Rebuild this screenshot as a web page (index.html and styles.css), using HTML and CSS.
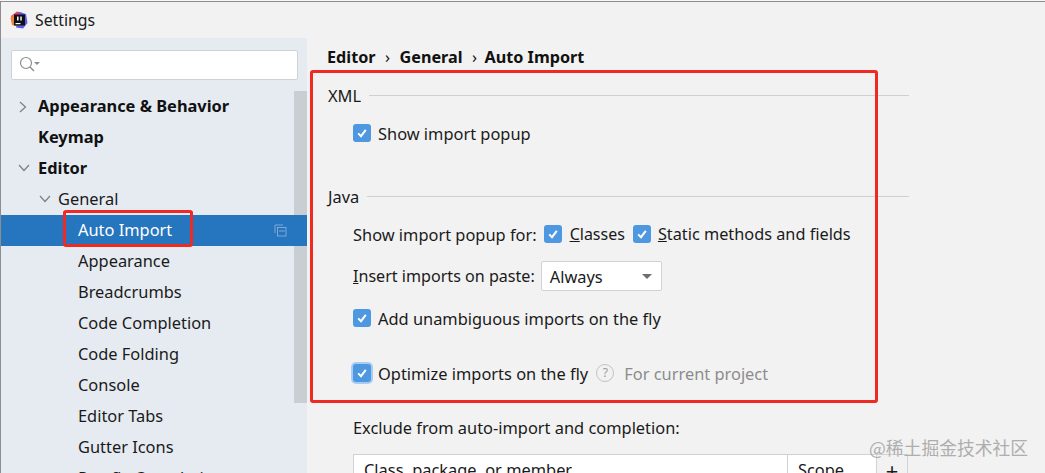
FILE: index.html
```html
<!DOCTYPE html>
<html lang="en">
<head>
<meta charset="utf-8">
<title>Settings</title>
<link rel="stylesheet" href="styles.css">
</head>
<body>
<div class="window">
  <header class="titlebar">
    <svg class="logo" width="18" height="18" viewBox="0 0 18 18">
      <path d="M1 5 L7 0.5 L13 2 L9 10 L3 13 Z" fill="#ea3b78"/>
      <path d="M9 1 L16 3 L17.5 12 L13 17.5 L6 16.5 Z" fill="#5a5ee6"/>
      <path d="M0.5 7 L4 3 L6 15 L2 14 Z" fill="#f0803c"/>
      <rect x="4" y="3.5" width="11" height="11" fill="#111"/>
      <rect x="5.5" y="12" width="5" height="1.2" fill="#fff"/>
      <rect x="7" y="5.5" width="1.6" height="4" fill="#eee"/>
      <rect x="10.2" y="5.5" width="1.6" height="4" fill="#eee"/>
    </svg>
    <span class="title">Settings</span>
  </header>
  <div class="main">
    <aside class="sidebar">
      <div class="search">
        <svg width="24" height="18" viewBox="0 0 24 18">
          <circle cx="8" cy="8" r="5.5" fill="none" stroke="#8a8d90" stroke-width="1.2"/>
          <path d="M12 12 L16 16" stroke="#8a8d90" stroke-width="1.4"/>
          <path d="M16 7 L22 7 L19 10 Z" fill="#8a8d90"/>
        </svg>
      </div>
      <div class="tree-wrap">
        <ul class="tree">
          <li class="row lvl0 bold"><svg class="arrow" width="10" height="12" viewBox="0 0 10 12"><path d="M2 1 L7.5 6 L2 11" fill="none" stroke="#7c7f82" stroke-width="1.2"/></svg>Appearance &amp; Behavior</li>
          <li class="row lvl0 bold">Keymap</li>
          <li class="row lvl0 bold"><svg class="arrow" width="12" height="10" viewBox="0 0 12 10"><path d="M1 2 L6 7.5 L11 2" fill="none" stroke="#7c7f82" stroke-width="1.2"/></svg>Editor</li>
          <li class="row lvl1"><svg class="arrow" width="12" height="10" viewBox="0 0 12 10"><path d="M1 2 L6 7.5 L11 2" fill="none" stroke="#7c7f82" stroke-width="1.2"/></svg>General</li>
          <li class="row lvl2 selected">Auto Import
            <svg class="copy" width="13" height="13" viewBox="0 0 13 13"><path d="M1 9 V1 H9" fill="none" stroke="#7fa8d2"/><rect x="3.5" y="3.5" width="8.5" height="8.5" fill="none" stroke="#7fa8d2"/><path d="M5 7 H11" stroke="#7fa8d2"/></svg>
          </li>
          <li class="row lvl2">Appearance</li>
          <li class="row lvl2">Breadcrumbs</li>
          <li class="row lvl2">Code Completion</li>
          <li class="row lvl2">Code Folding</li>
          <li class="row lvl2">Console</li>
          <li class="row lvl2">Editor Tabs</li>
          <li class="row lvl2">Gutter Icons</li>
          <li class="row lvl2">Postfix Completion</li>
        </ul>
        <div class="scrollbar"></div>
      </div>
    </aside>
    <main class="content">
      <nav class="crumbs"><span>Editor</span><i>›</i><span>General</span><i>›</i><span class="crumb-last">Auto Import</span></nav>
      <div class="group-head head-xml"><span>XML</span><hr></div>
      <label class="line check-xml"><b class="box"><svg width="12" height="12" viewBox="0 0 12 12"><path d="M2.2 6.4 L5 9.2 L9.8 2.8" fill="none" stroke="#fff" stroke-width="2"/></svg></b>Show import popup</label>
      <div class="group-head head-java"><span>Java</span><hr></div>
      <div class="line line-popup">
        <span class="lead">Show import popup for:</span>
        <b class="box"><svg width="12" height="12" viewBox="0 0 12 12"><path d="M2.2 6.4 L5 9.2 L9.8 2.8" fill="none" stroke="#fff" stroke-width="2"/></svg></b><span class="opt"><u>C</u>lasses</span>
        <b class="box"><svg width="12" height="12" viewBox="0 0 12 12"><path d="M2.2 6.4 L5 9.2 L9.8 2.8" fill="none" stroke="#fff" stroke-width="2"/></svg></b><span class="opt-static"><u>S</u>tatic methods and fields</span>
      </div>
      <div class="line line-paste">
        <span class="lead"><u>I</u>nsert imports on paste:</span>
        <div class="select"><span>Always</span><em></em></div>
      </div>
      <label class="line line-add"><b class="box"><svg width="12" height="12" viewBox="0 0 12 12"><path d="M2.2 6.4 L5 9.2 L9.8 2.8" fill="none" stroke="#fff" stroke-width="2"/></svg></b>Add unambiguous imports on the fly</label>
      <div class="line line-opt">
        <b class="box focus"><svg width="12" height="12" viewBox="0 0 12 12"><path d="M2.2 6.4 L5 9.2 L9.8 2.8" fill="none" stroke="#fff" stroke-width="2"/></svg></b><span>Optimize imports on the fly</span>
        <span class="help">?</span><span class="muted">For current project</span>
      </div>
      <div class="line line-excl">Exclude from auto-import and completion:</div>
      <div class="table">
        <div class="cell c-name">Class, package, or member</div>
        <div class="cell c-scope">Scope</div>
        <div class="cell c-plus">+</div>
      </div>
    </main>
  </div>
  <div class="note note-main"></div>
  <div class="note note-item"></div>
  <div class="mark">@稀土掘金技术社区</div>
</div>
</body>
</html>
```
FILE: styles.css
```css
* { box-sizing: border-box; }
html, body { margin: 0; padding: 0; height: 100%; overflow: hidden; }
body { background: #f8f8f8; font-family: "Noto Sans", "Open Sans", sans-serif; font-size: 16.4px; color: #1a1a1a; }
.window { position: relative; width: 1045px; height: 472px; margin-top: 1px; background: #f2f2f2; overflow: hidden; border-top: 1px solid #8d8d8d; border-left: 1px solid #8d8d8d; display: flex; flex-direction: column; }
.titlebar { height: 36px; flex: none; display: flex; align-items: center; padding-left: 9px; gap: 7px; }
.title { font-size: 15.8px; line-height: 36px; }
.main { flex: 1; display: flex; min-height: 0; }
.sidebar { width: 306px; flex: none; background: #e6ebf1; display: flex; flex-direction: column; }
.search { margin: 12px 9px 0 10px; height: 30px; background: #fff; border: 1px solid #d0d3d6; border-radius: 2px; padding: 4px 0 0 6px; flex: none; }
.search svg { display: block; }
.tree-wrap { position: relative; flex: 1; margin-top: 11px; min-height: 0; }
.tree { list-style: none; margin: 0; padding: 0; }
.row { position: relative; height: 31px; line-height: 30px; white-space: nowrap; }
.lvl0 { padding-left: 37px; }
.lvl1 { padding-left: 57px; }
.lvl2 { padding-left: 77px; }
.bold { font-weight: 700; color: #111; }
.arrow { position: absolute; top: 10px; }
.lvl0 .arrow { left: 17px; }
.lvl1 .arrow { left: 38px; }
.selected { background: #2675bf; color: #fff; z-index: 2; }
.copy { position: absolute; right: 20px; top: 9px; }
.scrollbar { position: absolute; top: 0; right: 0; width: 13px; height: 312px; background: #c9ced3; z-index: 1; }
.content { flex: 1; position: relative; padding-left: 20px; min-width: 0; }
.crumbs { height: 20px; margin-top: 9px; font-weight: 700; font-size: 16.2px; line-height: 20px; color: #111; display: flex; white-space: nowrap; }
.crumbs i { font-style: normal; font-weight: 400; width: 24px; text-align: center; }
.crumb-last { margin-left: -2px; }
.group-head { display: flex; align-items: center; gap: 8px; height: 20px; width: 582px; padding-left: 1px; }
.group-head hr { flex: 1; height: 1px; border: 0; background: #d0d0d0; margin: 0; }
.head-xml { margin-top: 18px; }
.head-java { margin-top: 41px; }
.line { display: flex; align-items: center; height: 24px; margin-left: 26px; white-space: nowrap; }
.box { display: flex; align-items: center; justify-content: center; width: 18px; height: 18px; background: #4d98e0; border-radius: 3px; margin-right: 7px; flex: none; }
.focus { box-shadow: 0 0 0 2px #a8cdf3; }
.check-xml { margin-top: 16px; }
.line-popup { margin-top: 16px; }
.lead { margin-right: 7px; }
.opt { margin: 0 8px 0 1px; font-size: 16px; }
.opt-static { font-size: 16.3px; }
.line-paste { margin-top: 18px; }
.line-paste .lead { font-size: 16.1px; }
.select { width: 121px; height: 30px; margin-left: -1px; background: #fff; border: 1px solid #d0d3d6; border-radius: 2px; display: flex; align-items: center; justify-content: space-between; padding: 0 9px 0 8px; }
.select em { width: 0; height: 0; border-left: 5px solid transparent; border-right: 5px solid transparent; border-top: 5px solid #6e6e6e; }
.line-add { margin-top: 18px; }
.line-opt { margin-top: 31px; }
.help { flex: none; width: 18px; height: 18px; border: 1.5px solid #c2c2c2; border-radius: 50%; color: #9a9a9a; font-size: 12px; line-height: 15px; text-align: center; margin: 0 10px 0 8px; }
.muted { color: #8c8c8c; }
.line-excl { margin-top: 30px; }
.table { display: flex; margin: 15px 0 0 26px; height: 40px; }
.cell { background: #fff; border: 1px solid #d0d3d6; border-bottom: 0; padding: 0 0 0 10px; line-height: 30px; white-space: nowrap; }
.c-name { width: 435px; }
.c-scope { width: 89px; border-left: 0; }
.c-plus { width: 31px; background: #f2f2f2; border-left: 0; font-size: 22px; text-align: center; padding: 0; }
.note { position: absolute; border: 3px solid #ee2a22; border-radius: 3px; z-index: 5; }
.note-main { left: 309px; top: 68px; width: 568px; height: 333px; }
.note-item { left: 62px; top: 208px; width: 130px; height: 37px; }
.mark { position: absolute; left: 868px; top: 434px; font-family: "Noto Sans CJK SC", sans-serif; font-size: 17.8px; line-height: 22px; color: #a3a3a3; opacity: .85; z-index: 6; white-space: nowrap; }
```
